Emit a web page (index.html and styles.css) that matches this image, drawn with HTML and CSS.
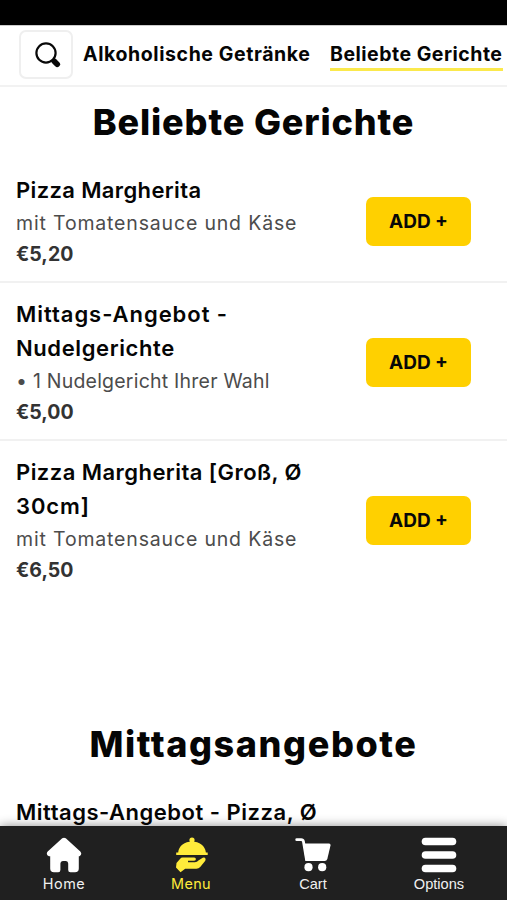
FILE: index.html
```html
<!DOCTYPE html>
<html lang="de">
<head>
<meta charset="utf-8">
<title>Menu</title>
<link rel="stylesheet" href="styles.css">
</head>
<body>
<div class="app">
  <div class="status-bar"></div>
  <header class="category-bar">
    <button class="search" aria-label="Suche">
      <svg width="26" height="26" viewBox="0 0 26 26"><circle cx="11" cy="11" r="9.6" fill="none" stroke="#080808" stroke-width="2.2"/><path d="M17.5 17.5l1.8 1.8" stroke="#080808" stroke-width="2.5"/><path d="M19.2 19.2l3 3" stroke="#080808" stroke-width="5.6" stroke-linecap="round"/></svg>
    </button>
    <a class="category drinks">Alkoholische Getränke</a>
    <a class="category popular active">Beliebte Gerichte</a>
  </header>
  <main class="menu">
    <section class="section">
      <h2><span class="h-popular">Beliebte Gerichte</span></h2>
      <article class="item">
        <div class="info"><h3><span class="t-pizza">Pizza Margherita</span></h3><p class="desc">mit Tomatensauce und Käse</p><p class="price">€5,20</p></div>
        <button class="add">ADD +</button>
      </article>
      <article class="item">
        <div class="info"><h3><span class="t-lunch">Mittags-Angebot -</span><br><span class="t-noodle">Nudelgerichte</span></h3><p class="desc d-noodle">• 1 Nudelgericht Ihrer Wahl</p><p class="price">€5,00</p></div>
        <button class="add">ADD +</button>
      </article>
      <article class="item">
        <div class="info"><h3><span class="t-large">Pizza Margherita [Groß, Ø</span><br><span class="t-size">30cm]</span></h3><p class="desc">mit Tomatensauce und Käse</p><p class="price">€6,50</p></div>
        <button class="add">ADD +</button>
      </article>
    </section>
    <section class="section">
      <h2><span class="h-lunch">Mittagsangebote</span></h2>
      <article class="item">
        <div class="info"><h3><span class="t-lunch-pizza">Mittags-Angebot - Pizza, Ø</span></h3></div>
      </article>
    </section>
  </main>
  <nav class="tabs">
    <a class="tab home">
      <svg width="36" height="36" viewBox="0 0 36 36"><path d="M16.2 1.3Q18 0 19.8 1.3L34.3 14.6Q36.6 17.4 33.5 19.2H32.8V31.5Q32.8 35.3 29 35.3H24.4Q22.2 35.3 22.2 33V26.5Q22.2 24 20 24H16.8Q14.4 24 14.4 26.5V33Q14.4 35.3 12.2 35.3H8Q4.2 35.3 4.2 31.5V19.2H3Q-.6 17.4 1.7 14.6Z" fill="#fff"/></svg>
      <span>Home</span>
    </a>
    <a class="tab selected">
      <svg width="36" height="36" viewBox="0 0 36 36"><g fill="#ffeb3b"><circle cx="19" cy="3" r="2.6"/><path d="M5.2 15.5C5.7 8.5 11.7 4.4 19 4.4S32.2 8.5 32.9 15.5H34.7V18H3.2V15.5Z"/><path d="M3.5 26L7 21.9Q8 20.6 9.8 20.6H21.2Q23 20.8 22.9 22.2Q22.7 23.7 20.7 23.7H15V25.3H21.9Q24.2 25.2 25.4 23.6L29.7 20.7Q32.2 20.3 32.6 21.9Q32.8 23 31.7 24.5L27.2 30Q25.7 31.8 23.4 31.8H12.2L7.5 35.3L3 30.4Z"/></g></svg>
      <span>Menu</span>
    </a>
    <a class="tab cart">
      <svg width="36" height="36" viewBox="0 0 36 36"><path d="M1.7 2.7H6.2Q8 2.7 8.4 4.3L11.5 22.7H29" fill="none" stroke="#fff" stroke-width="2.8" stroke-linecap="round"/><path d="M8.2 6.4H34Q35.8 6.5 35.5 8.4L32.3 22Q31.8 24 29.5 24H12Q10.8 24 10.5 22.5Z" fill="#fff"/><circle cx="13.5" cy="30.2" r="4.1" fill="#fff"/><circle cx="27.2" cy="30.2" r="4.1" fill="#fff"/></svg>
      <span>Cart</span>
    </a>
    <a class="tab options">
      <svg width="36" height="36" viewBox="0 0 36 36"><g fill="#fff"><rect x=".7" y=".7" width="34.6" height="7.6" rx="3.8"/><rect x=".7" y="14.2" width="34.6" height="7.6" rx="3.8"/><rect x=".7" y="27.7" width="34.6" height="7.6" rx="3.8"/></g></svg>
      <span>Options</span>
    </a>
  </nav>
</div>
</body>
</html>
```
FILE: styles.css
```css
* { box-sizing: border-box; }
body { margin: 0; background: #fff; font-family: Inter, "Liberation Sans", sans-serif; color: #050505; }
h2, h3, p { margin: 0; }
button { font-family: inherit; }
.app { height: 900px; display: flex; flex-direction: column; overflow: hidden; }
.status-bar { height: 25px; background: #000; flex: none; }
.category-bar { height: 62px; flex: none; display: flex; align-items: flex-start; padding: 4px 0 0 19px; border-bottom: 2px solid #f2f2f2; border-top: 1px solid #ccc; white-space: nowrap; }
.search { width: 54px; height: 49px; flex: none; border: 2px solid #efefef; border-radius: 7px; background: #fff; padding: 1px 0 0 3px; display: flex; align-items: center; justify-content: center; }
.category { height: 41px; flex: none; font-size: 19.5px; line-height: 48px; font-weight: 700; border-bottom: 3px solid transparent; }
.drinks { margin-left: 10px; width: 228px; letter-spacing: .59px; }
.popular { margin-left: 19px; width: 173px; letter-spacing: .5px; }
.active { border-color: #fbe94c; }
.menu { flex: 1; min-height: 0; overflow: hidden; }
.section { height: 622px; }
h2 { height: 72px; line-height: 70px; font-size: 36px; font-weight: 800; text-align: center; white-space: nowrap; }
.h-popular { letter-spacing: .87px; }
.h-lunch { letter-spacing: 1.6px; }
.item { display: flex; align-items: center; justify-content: space-between; padding: 15px 36px 13px 16px; border-bottom: 2px solid #f1f1f1; }
.item:last-child { border-bottom: 0; }
.info { white-space: nowrap; }
h3 { margin: -1px 0 1px; font-size: 22px; font-weight: 600; line-height: 34px; }
.t-pizza { letter-spacing: .36px; }
.t-lunch { letter-spacing: .95px; }
.t-noodle { letter-spacing: .6px; }
.t-large { letter-spacing: .45px; }
.t-size { letter-spacing: .9px; }
.t-lunch-pizza { letter-spacing: .51px; }
.desc { font-size: 19.5px; line-height: 31px; color: #4c4c4c; font-weight: 400; letter-spacing: .83px; }
.d-noodle { letter-spacing: .22px; }
.price { font-size: 19.5px; line-height: 30px; margin-bottom: -1px; color: #333; font-weight: 700; }
.add { width: 105px; height: 49px; flex: none; padding: 0; border: 0; border-radius: 7px; background: #ffd000; color: #080808; font-size: 19px; font-weight: 700; }
.tabs { height: 74px; flex: none; display: flex; justify-content: space-between; background: #202020; padding: 0 32px 0 28px; box-shadow: 0 0 10px rgba(0,0,0,.45); position: relative; }
.tab { width: 72px; display: flex; flex-direction: column; align-items: center; padding-top: 11px; color: #f0f0f0; font-size: 14.4px; line-height: 22px; }
.tab svg { display: block; flex: none; }
.home { letter-spacing: .5px; }
.selected { color: #ffeb3b; letter-spacing: .4px; margin-left: 2px; margin-right: -2px; }
.cart, .options { font-family: "Liberation Sans", sans-serif; font-size: 14.6px; }
.cart { margin-right: 1px; margin-left: -1px; }
```
